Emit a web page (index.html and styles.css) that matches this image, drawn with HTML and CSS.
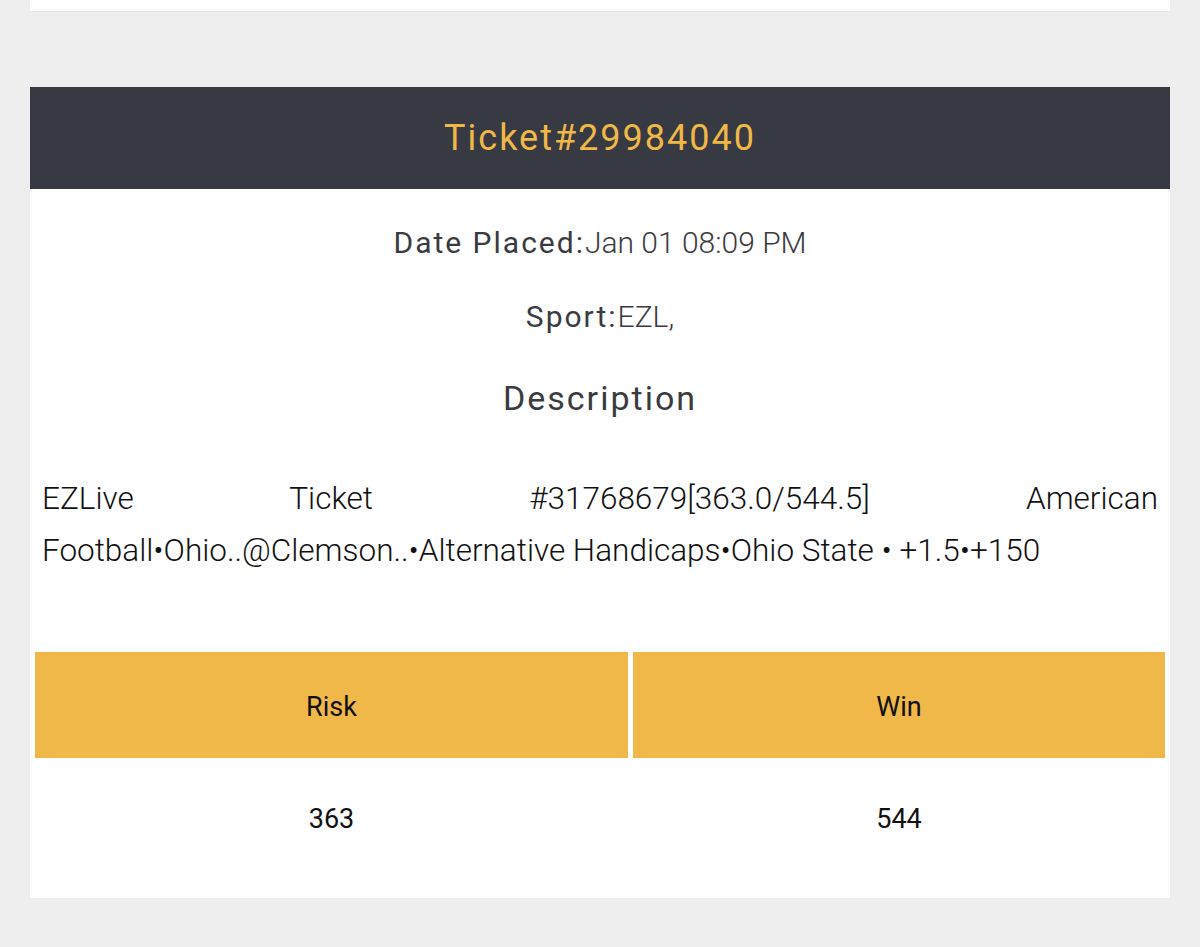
FILE: index.html
```html
<!DOCTYPE html>
<html>
<head>
<meta charset="utf-8">
<link rel="stylesheet" href="styles.css">
</head>
<body>
<div class="page">
  <div class="card-top"></div>
  <div class="card">
    <div class="card-head">Ticket#29984040</div>
    <div class="info">
      <p class="line line-date"><span class="label">Date Placed:</span><span class="value">Jan 01 08:09 PM</span></p>
      <p class="line line-sport"><span class="label">Sport:</span><span class="value">EZL,</span></p>
      <h3 class="desc-title">Description</h3>
      <p class="desc">EZLive Ticket #31768679[363.0/544.5] American Football•Ohio..@Clemson..•Alternative Handicaps•Ohio State • +1.5•+150</p>
    </div>
    <div class="amounts">
      <div class="th">Risk</div>
      <div class="th">Win</div>
      <div class="td">363</div>
      <div class="td">544</div>
    </div>
  </div>
</div>
</body>
</html>
```
FILE: styles.css
```css
html, body {
  margin: 0;
  padding: 0;
  background: #eeeeee;
}
.page {
  padding: 0 30px;
}
.card-top {
  height: 11px;
  background: #ffffff;
  border-bottom: 1px solid #e6e6e6;
  margin-bottom: 75px;
}
.card {
  background: #ffffff;
  padding-bottom: 18px;
}
.card-head {
  height: 102px;
  background: #373a42;
  color: #f0b847;
  display: flex;
  align-items: center;
  justify-content: center;
  font-family: "Roboto", sans-serif;
  font-weight: 400;
  font-size: 36px;
  letter-spacing: 2px;
}
.info {
  padding: 0 12px;
}
.line {
  margin: 0;
  text-align: center;
  font-family: "Roboto", sans-serif;
  font-size: 30px;
  color: #3a3b40;
}
.line-date {
  margin-top: 36px;
  line-height: 36px;
}
.line-sport {
  margin-top: 38px;
  line-height: 36px;
}
.label {
  letter-spacing: 2px;
  font-weight: 400;
}
.value {
  font-weight: 300;
}
.desc-title {
  margin: 43px 0 0;
  text-align: center;
  font-family: "Roboto", sans-serif;
  font-weight: 400;
  font-size: 34px;
  letter-spacing: 2px;
  color: #3a3b40;
  line-height: 40px;
}
.desc {
  margin: 55px 0 0;
  font-family: "Roboto", sans-serif;
  font-weight: 300;
  font-size: 31.5px;
  line-height: 52px;
  color: #111111;
  text-align: justify;
}
.amounts {
  margin-top: 75px;
  padding: 0 5px;
  display: grid;
  grid-template-columns: 593px 532px;
  column-gap: 5px;
}
.th {
  height: 106px;
  box-sizing: border-box;
  padding-top: 4px;
  background: #f0b849;
  display: flex;
  align-items: center;
  justify-content: center;
  font-family: "Roboto", sans-serif;
  font-size: 27px;
  color: #111111;
}
.td {
  height: 122px;
  display: flex;
  align-items: center;
  justify-content: center;
  font-family: "Roboto", sans-serif;
  font-size: 27px;
  color: #111111;
}
```
